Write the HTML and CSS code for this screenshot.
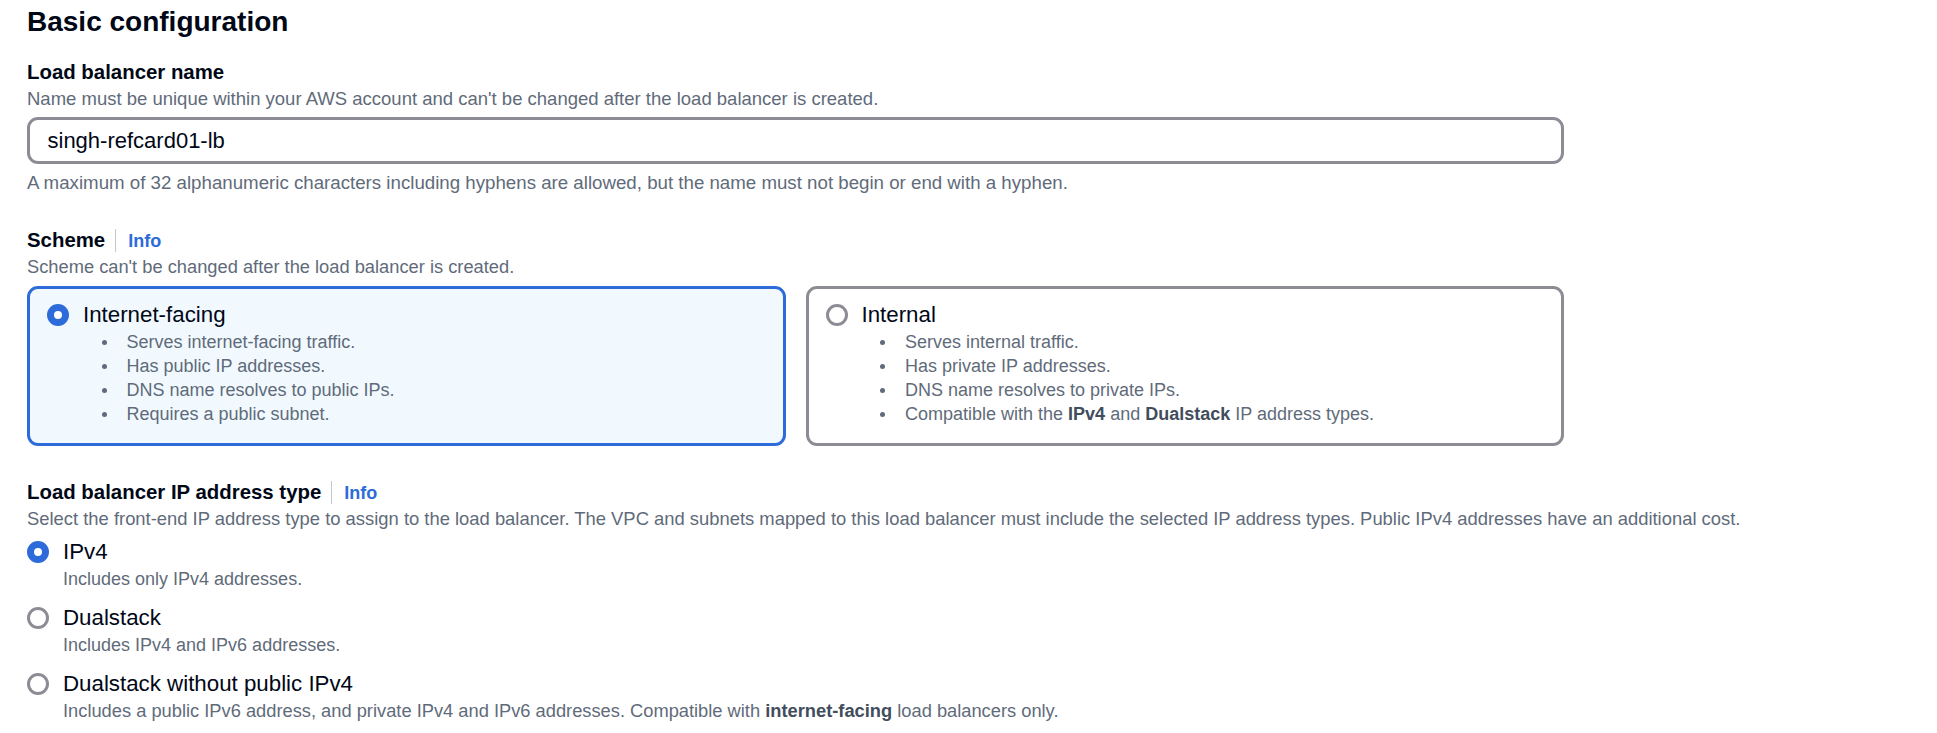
FILE: index.html
```html
<!DOCTYPE html>
<html lang="en">
<head>
<meta charset="utf-8">
<title>Basic configuration</title>
<link rel="stylesheet" href="styles.css">
</head>
<body>
<main class="page">
  <h2 class="title">Basic configuration</h2>

  <section class="field field-name">
    <div class="label-row"><span class="label">Load balancer name</span></div>
    <div class="desc">Name must be unique within your AWS account and can't be changed after the load balancer is created.</div>
    <input class="input" type="text" value="singh-refcard01-lb">
    <div class="desc constraint">A maximum of 32 alphanumeric characters including hyphens are allowed, but the name must not begin or end with a hyphen.</div>
  </section>

  <section class="field field-scheme">
    <div class="label-row"><span class="label">Scheme</span><span class="sep"></span><a class="info">Info</a></div>
    <div class="desc desc-scheme">Scheme can't be changed after the load balancer is created.</div>
    <div class="tiles">
      <div class="tile selected">
        <div class="option">
          <div class="radio-box"><span class="radio checked"></span></div>
          <div class="opt-text">
            <div class="opt-label">Internet-facing</div>
            <ul class="bullets">
              <li>Serves internet-facing traffic.</li>
              <li>Has public IP addresses.</li>
              <li>DNS name resolves to public IPs.</li>
              <li>Requires a public subnet.</li>
            </ul>
          </div>
        </div>
      </div>
      <div class="tile">
        <div class="option">
          <div class="radio-box"><span class="radio"></span></div>
          <div class="opt-text">
            <div class="opt-label">Internal</div>
            <ul class="bullets">
              <li>Serves internal traffic.</li>
              <li>Has private IP addresses.</li>
              <li>DNS name resolves to private IPs.</li>
              <li><span>Compatible with the <b>IPv4</b> and <b>Dualstack</b> IP address types.</span></li>
            </ul>
          </div>
        </div>
      </div>
    </div>
  </section>

  <section class="field field-ip">
    <div class="label-row"><span class="label">Load balancer IP address type</span><span class="sep"></span><a class="info">Info</a></div>
    <div class="desc desc-long">Select the front-end IP address type to assign to the load balancer. The VPC and subnets mapped to this load balancer must include the selected IP address types. Public IPv4 addresses have an additional cost.</div>
    <div class="radio-group">
      <div class="option">
        <div class="radio-box"><span class="radio checked"></span></div>
        <div class="opt-text">
          <div class="opt-label">IPv4</div>
          <div class="opt-desc">Includes only IPv4 addresses.</div>
        </div>
      </div>
      <div class="option">
        <div class="radio-box"><span class="radio"></span></div>
        <div class="opt-text">
          <div class="opt-label">Dualstack</div>
          <div class="opt-desc">Includes IPv4 and IPv6 addresses.</div>
        </div>
      </div>
      <div class="option">
        <div class="radio-box"><span class="radio"></span></div>
        <div class="opt-text">
          <div class="opt-label">Dualstack without public IPv4</div>
          <div class="opt-desc opt-desc-long">Includes a public IPv6 address, and private IPv4 and IPv6 addresses. Compatible with <b>internet-facing</b> load balancers only.</div>
        </div>
      </div>
    </div>
  </section>
</main>
</body>
</html>
```

FILE: styles.css
```css
html, body {
  margin: 0;
  background: #ffffff;
}

body {
  font-family: "Liberation Sans", Arial, sans-serif;
  color: #000716;
}

.page {
  padding: 4px 0 0 27px;
}

.title {
  margin: 0;
  font-size: 28px;
  line-height: 36px;
  font-weight: 700;
  color: #000716;
}

.field-name { margin-top: 17px; }
.field-scheme { margin-top: 30px; }
.field-ip { margin-top: 31px; }

.label-row {
  display: flex;
  align-items: baseline;
  height: 30px;
}

.label {
  font-size: 20.4px;
  line-height: 30px;
  font-weight: 700;
  color: #000716;
}

.sep {
  align-self: center;
  width: 1px;
  height: 23px;
  background: #c6c6cd;
  margin: 0 12px 0 10px;
}

.info {
  font-size: 18px;
  line-height: 30px;
  font-weight: 700;
  color: #2c6bd9;
  cursor: pointer;
}

.desc {
  font-size: 18.5px;
  line-height: 24px;
  color: #5f6b7a;
  white-space: nowrap;
}

.desc-scheme {
  font-size: 18.3px;
}

.desc-long {
  font-size: 18.4px;
}

.input {
  display: block;
  box-sizing: border-box;
  width: 1537px;
  height: 47px;
  margin: 6px 0 0 0;
  border: 3px solid #8c8c94;
  border-radius: 11px;
  padding: 0 0 0 17.5px;
  font-family: "Liberation Sans", Arial, sans-serif;
  font-size: 22px;
  color: #000716;
  background: #ffffff;
  outline: none;
}

.constraint {
  margin-top: 7px;
  font-size: 18.7px;
}

.tiles {
  display: grid;
  grid-template-columns: 1fr 1fr;
  gap: 20px;
  width: 1537px;
  margin-top: 7px;
}

.tile {
  border: 3px solid #8c8c94;
  border-radius: 11px;
  padding: 11px 17px 17px 17px;
  background: #ffffff;
}

.tile.selected {
  border-color: #2c6bd9;
  background: #f1f9ff;
}

.option {
  display: flex;
  gap: 14px;
}

.radio-box {
  flex: none;
  height: 30px;
  display: flex;
  align-items: center;
}

.radio {
  display: block;
  box-sizing: border-box;
  width: 22px;
  height: 22px;
  border-radius: 50%;
  border: 3px solid #8c8c94;
  background: #ffffff;
}

.radio.checked {
  border: 7px solid #2c6bd9;
}

.opt-label {
  font-size: 22.3px;
  line-height: 30px;
  color: #000716;
}

.opt-desc {
  font-size: 18px;
  line-height: 24px;
  color: #5f6b7a;
  white-space: nowrap;
}

.opt-desc-long {
  font-size: 18.3px;
}

.opt-desc b,
.bullets b {
  color: #414d5c;
}

.bullets {
  list-style: none;
  margin: 0;
  padding: 0;
}

.bullets li {
  display: flex;
  align-items: center;
  font-size: 18px;
  line-height: 24px;
  color: #5f6b7a;
  white-space: nowrap;
}

.bullets li::before {
  content: "";
  flex: none;
  width: 5px;
  height: 5px;
  border-radius: 50%;
  background: #5f6b7a;
  margin: 0 20px 0 18.5px;
}

.radio-group {
  display: flex;
  flex-direction: column;
  gap: 12px;
  margin-top: 5.5px;
}
```
